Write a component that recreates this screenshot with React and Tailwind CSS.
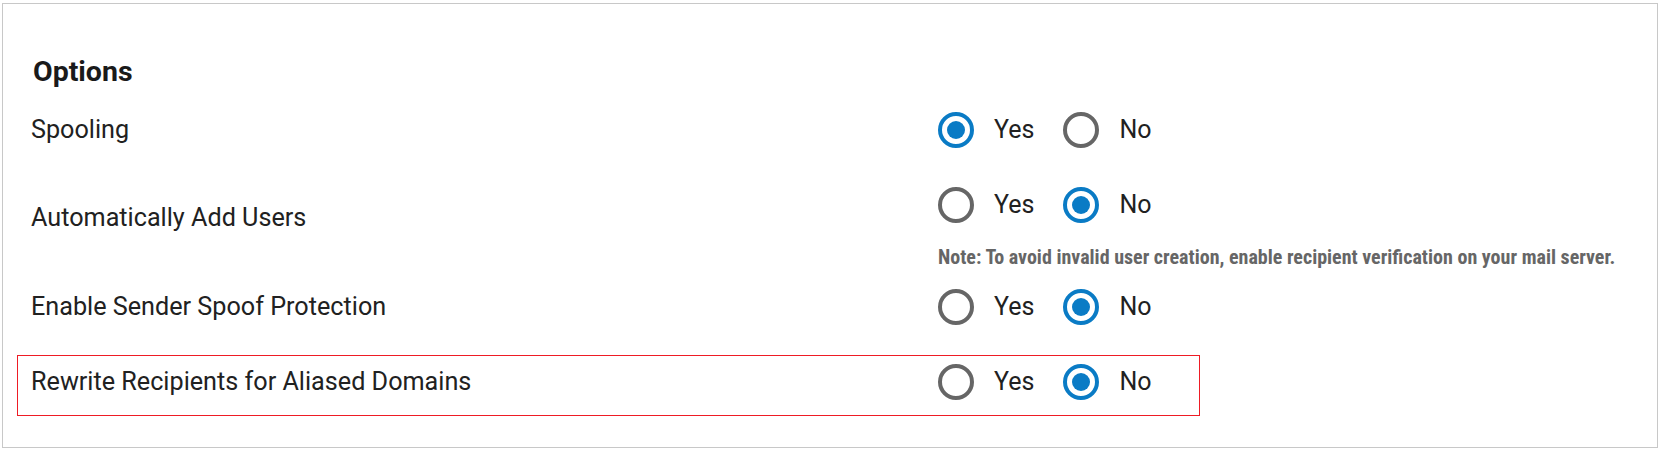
import React from "react";

const BLUE = "border-[#0a7bc5]";

function Radio({ checked }) {
  return checked ? (
    <div className={`w-[36px] h-[36px] rounded-full border-[4px] ${BLUE} flex items-center justify-center shrink-0`}>
      <div className="w-[18px] h-[18px] rounded-full bg-[#0a7bc5]" />
    </div>
  ) : (
    <div className="w-[36px] h-[36px] rounded-full border-[4px] border-[#666666] shrink-0" />
  );
}

function YesNo({ value }) {
  return (
    <div className="flex items-center h-[36px]">
      <Radio checked={value === "yes"} />
      <span className="ml-[20px] mr-[29px] text-[25px] leading-[36px] text-[#212121]">Yes</span>
      <Radio checked={value === "no"} />
      <span className="ml-[20px] text-[25px] leading-[36px] text-[#212121]">No</span>
    </div>
  );
}

function Row({ label, value, highlight, className = "", children, labelClass = "" }) {
  return (
    <div
      className={`ml-[14px] w-[1183px] pl-[13px] pt-[8px] pb-[15px] border ${
        highlight ? "border-[#ee1c25]" : "border-transparent"
      } flex items-start ${className}`}
    >
      <div className={`w-[907px] shrink-0 text-[25.2px] leading-[36px] text-[#212121] ${labelClass}`}>{label}</div>
      <div className="flex flex-col shrink-0">
        <YesNo value={value} />
        {children}
      </div>
    </div>
  );
}

export default function App() {
  return (
    <div className="pl-[2px] pt-[3px] bg-white" style={{ fontFamily: "Roboto, 'Noto Sans', sans-serif" }}>
      <div className="w-[1656px] h-[445px] border border-[#c8c8c8] bg-white pt-[51.5px] overflow-hidden">
        <div className="pl-[30px] text-[28.5px] leading-[32px] font-bold text-[#1a1a1a]">Options</div>
        <Row label="Spooling" value="yes" className="mt-[15px]" />
        <Row label="Automatically Add Users" value="no" className="mt-[14px]" labelClass="mt-[13px]">
          <div className="mt-[22px] text-[20px] leading-[24px] font-bold text-[#666666] font-stretch-semi-condensed whitespace-nowrap">
            Note: To avoid invalid user creation, enable recipient verification on your mail server.
          </div>
        </Row>
        <Row label="Enable Sender Spoof Protection" value="no" className="mt-[-5px]" />
        <Row label="Rewrite Recipients for Aliased Domains" value="no" highlight className="mt-[14.5px]" />
      </div>
    </div>
  );
}
